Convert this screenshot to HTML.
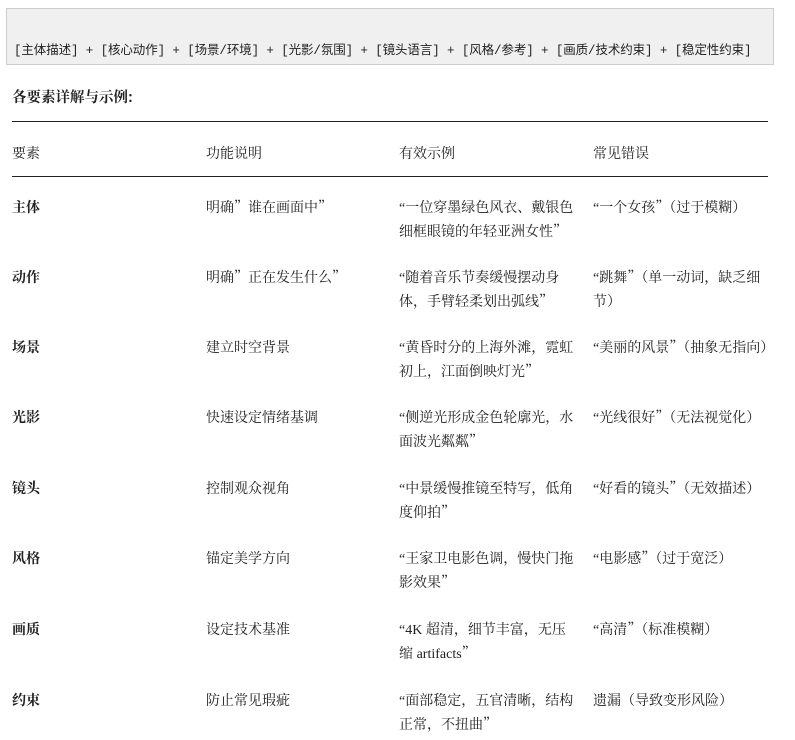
<!DOCTYPE html>
<html><head><meta charset="utf-8"><style>
body{margin:0;background:#fff;width:795px;height:740px;overflow:hidden;font-family:"Noto Serif CJK SC","Liberation Serif",serif;font-size:14px;color:#222;position:relative}
.code{position:absolute;left:6px;top:8px;width:766px;height:55px;background:#f0f0f0;border:1px solid #ccc;}
.code span{position:absolute;left:7px;top:30px;font-family:"Liberation Mono","Noto Sans CJK SC",monospace;font-size:12.5px;letter-spacing:-0.1px;white-space:nowrap;color:#222}
.h{position:absolute;left:12px;top:87px;font-weight:bold;font-size:14.5px;line-height:20px}
.rule{position:absolute;left:12px;width:756px;height:1px;background:#222}
.c{position:absolute;line-height:24px;white-space:nowrap}
.b{font-weight:bold}
.l{font-family:"Liberation Serif",serif;line-height:1}
</style></head><body>
<div class="code"><span>[主体描述] + [核心动作] + [场景/环境] + [光影/氛围] + [镜头语言] + [风格/参考] + [画质/技术约束] + [稳定性约束]</span></div>
<div class="h">各要素详解与示例:</div>
<div class="rule" style="top:121px"></div>
<div class="c" style="left:12px;top:141px">要素</div>
<div class="c" style="left:206px;top:141px">功能说明</div>
<div class="c" style="left:399px;top:141px">有效示例</div>
<div class="c" style="left:593px;top:141px">常见错误</div>
<div class="rule" style="top:176px"></div>

<div class="c b" style="left:12px;top:195px">主体</div>
<div class="c" style="left:206px;top:195px">明确”谁在画面中”</div>
<div class="c" style="left:399px;top:195px"><span class="l">“</span>一位穿墨绿色风衣、戴银色<br>细框眼镜的年轻亚洲女性”</div>
<div class="c" style="left:593px;top:195px"><span class="l">“</span>一个女孩”（过于模糊）</div>

<div class="c b" style="left:12px;top:265px">动作</div>
<div class="c" style="left:206px;top:265px">明确”正在发生什么”</div>
<div class="c" style="left:399px;top:265px"><span class="l">“</span>随着音乐节奏缓慢摆动身<br>体，手臂轻柔划出弧线”</div>
<div class="c" style="left:593px;top:265px"><span class="l">“</span>跳舞”（单一动词，缺乏细<br>节）</div>

<div class="c b" style="left:12px;top:335px">场景</div>
<div class="c" style="left:206px;top:335px">建立时空背景</div>
<div class="c" style="left:399px;top:335px"><span class="l">“</span>黄昏时分的上海外滩，霓虹<br>初上，江面倒映灯光”</div>
<div class="c" style="left:593px;top:335px"><span class="l">“</span>美丽的风景”（抽象无指向）</div>

<div class="c b" style="left:12px;top:405px">光影</div>
<div class="c" style="left:206px;top:405px">快速设定情绪基调</div>
<div class="c" style="left:399px;top:405px"><span class="l">“</span>侧逆光形成金色轮廓光，水<br>面波光粼粼”</div>
<div class="c" style="left:593px;top:405px"><span class="l">“</span>光线很好”（无法视觉化）</div>

<div class="c b" style="left:12px;top:476px">镜头</div>
<div class="c" style="left:206px;top:476px">控制观众视角</div>
<div class="c" style="left:399px;top:476px"><span class="l">“</span>中景缓慢推镜至特写，低角<br>度仰拍”</div>
<div class="c" style="left:593px;top:476px"><span class="l">“</span>好看的镜头”（无效描述）</div>

<div class="c b" style="left:12px;top:546px">风格</div>
<div class="c" style="left:206px;top:546px">锚定美学方向</div>
<div class="c" style="left:399px;top:546px"><span class="l">“</span>王家卫电影色调，慢快门拖<br>影效果”</div>
<div class="c" style="left:593px;top:546px"><span class="l">“</span>电影感”（过于宽泛）</div>

<div class="c b" style="left:12px;top:617px">画质</div>
<div class="c" style="left:206px;top:617px">设定技术基准</div>
<div class="c" style="left:399px;top:617px"><span class="l">“4K</span> 超清，细节丰富，无压<br>缩 <span class="l">artifacts</span>”</div>
<div class="c" style="left:593px;top:617px"><span class="l">“</span>高清”（标准模糊）</div>

<div class="c b" style="left:12px;top:688px">约束</div>
<div class="c" style="left:206px;top:688px">防止常见瑕疵</div>
<div class="c" style="left:399px;top:688px"><span class="l">“</span>面部稳定，五官清晰，结构<br>正常，不扭曲”</div>
<div class="c" style="left:593px;top:688px">遗漏（导致变形风险）</div>
</body></html>
